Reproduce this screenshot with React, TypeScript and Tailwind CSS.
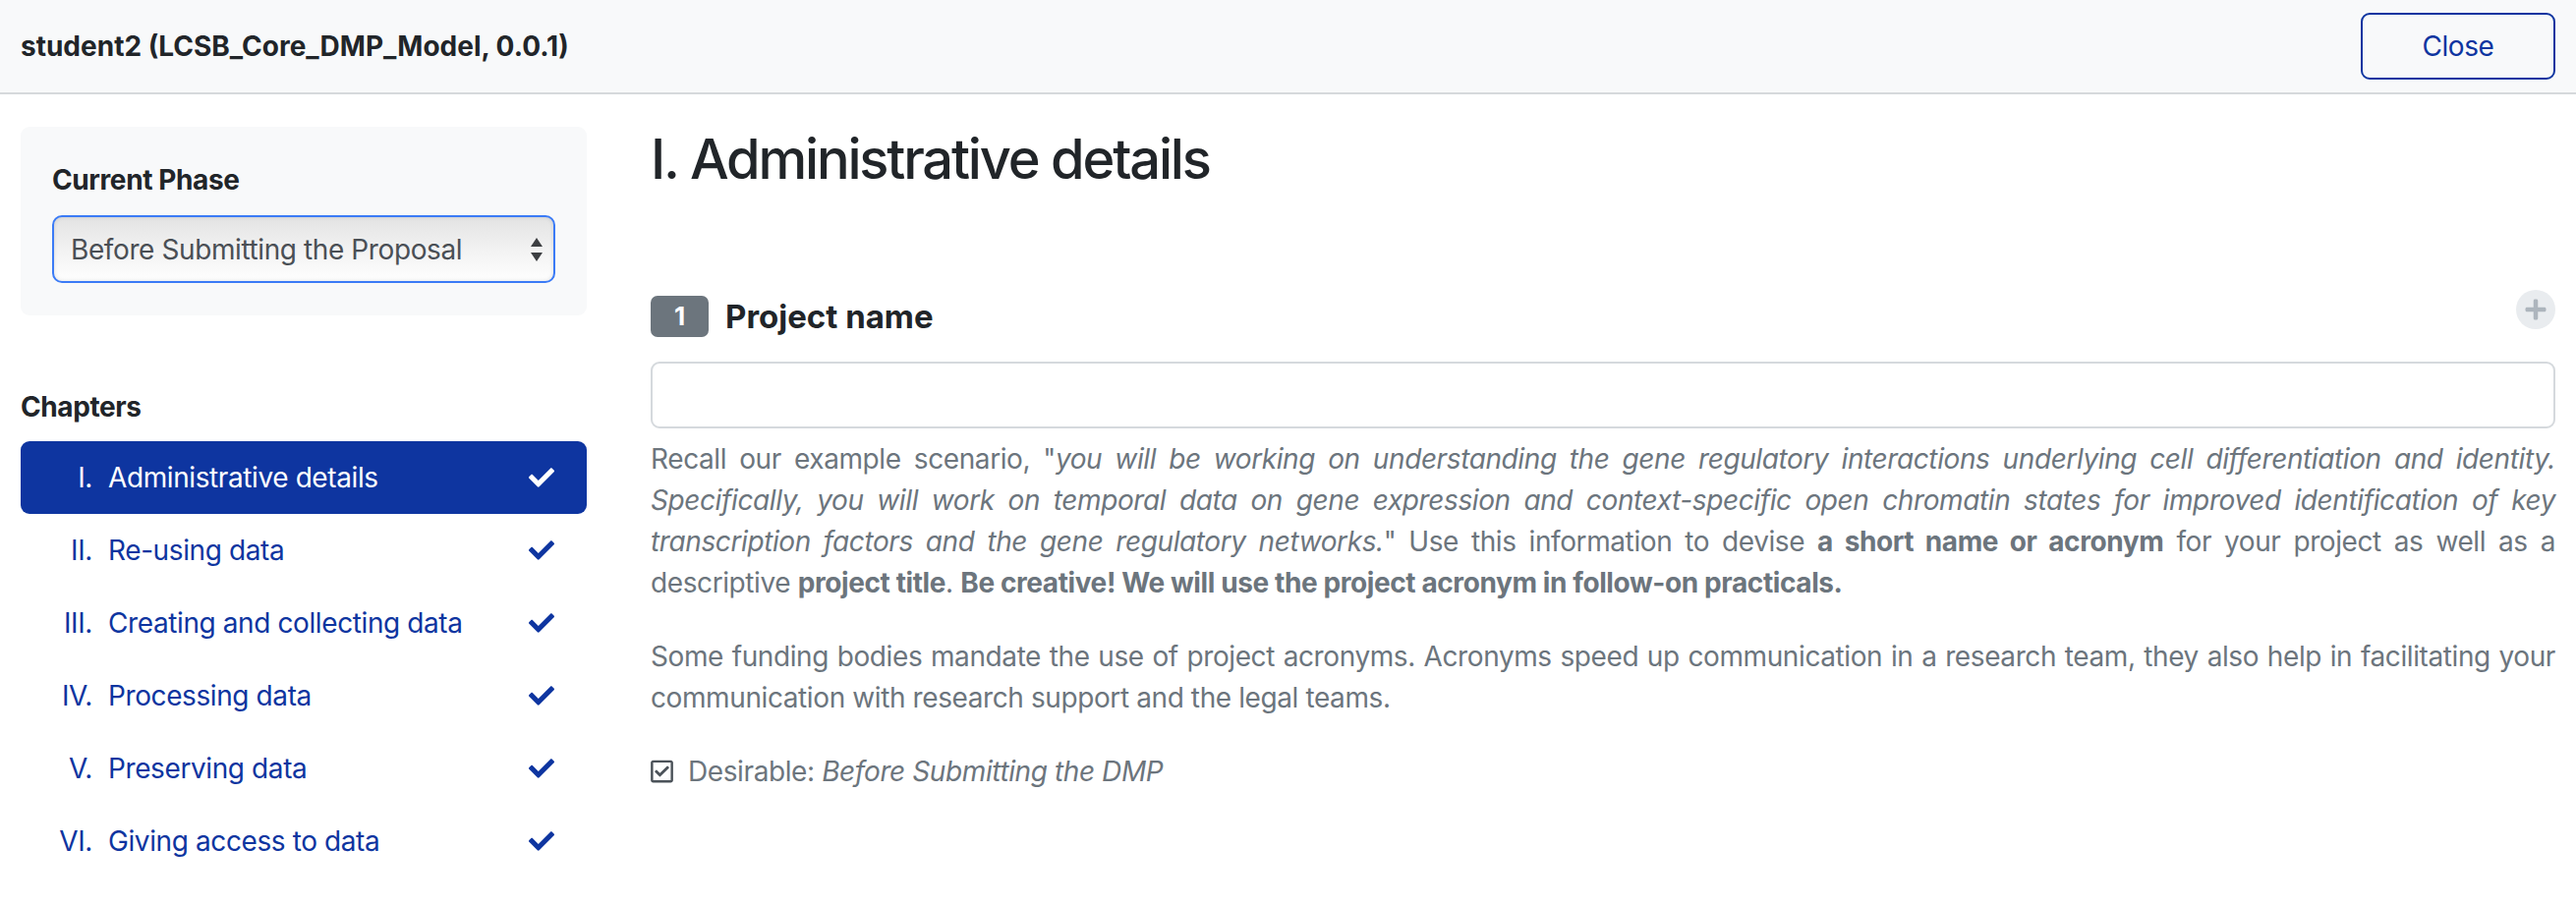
import { useState } from "react";

/* ─── Chapter data ─── */
const chapters = [
  { num: "I.", label: "Administrative details" },
  { num: "II.", label: "Re-using data" },
  { num: "III.", label: "Creating and collecting data" },
  { num: "IV.", label: "Processing data" },
  { num: "V.", label: "Preserving data" },
  { num: "VI.", label: "Giving access to data" },
];

/* ─── Icons ─── */
function CheckIcon({ className }: { className?: string }) {
  return (
    <svg className={className} viewBox="0 0 512 512" aria-hidden="true">
      <path
        fill="currentColor"
        d="M173.898 439.404l-166.4-166.4c-9.997-9.997-9.997-26.206 0-36.204l36.203-36.204c9.997-9.998 26.207-9.998 36.204 0L192 312.69 432.095 72.596c9.997-9.997 26.207-9.997 36.204 0l36.203 36.204c9.997 9.997 9.997 26.206 0 36.204l-294.4 294.401c-9.998 9.997-26.207 9.997-36.204-.001z"
      />
    </svg>
  );
}

function PlusIcon({ className }: { className?: string }) {
  return (
    <svg className={className} viewBox="0 0 448 512" aria-hidden="true">
      <path
        fill="currentColor"
        d="M416 208H272V64c0-17.670-14.330-32-32-32h-32c-17.670 0-32 14.330-32 32v144H32c-17.670 0-32 14.330-32 32v32c0 17.670 14.330 32 32 32h144v144c0 17.670 14.330 32 32 32h32c17.670 0 32-14.330 32-32V304h144c17.670 0 32-14.330 32-32v-32c0-17.670-14.330-32-32-32z"
      />
    </svg>
  );
}

function CheckSquareIcon({ className }: { className?: string }) {
  return (
    <svg className={className} viewBox="0 0 448 512" aria-hidden="true">
      <path
        fill="currentColor"
        d="M400 32H48C21.49 32 0 53.49 0 80v352c0 26.51 21.49 48 48 48h352c26.51 0 48-21.49 48-48V80c0-26.51-21.49-48-48-48zm0 400H48V80h352v352zm-35.864-241.724L191.547 361.48c-4.705 4.667-12.303 4.637-16.97-.068l-90.781-91.516c-4.667-4.705-4.637-12.303.069-16.971l22.719-22.536c4.705-4.667 12.303-4.637 16.97.069l59.792 60.277 141.352-140.216c4.705-4.667 12.303-4.637 16.97.068l22.536 22.718c4.667 4.706 4.637 12.304-.068 16.971z"
      />
    </svg>
  );
}

/* ─── Sidebar ─── */
function Sidebar() {
  const [phase, setPhase] = useState("before-proposal");
  const active = 0;

  return (
    <aside className="w-[618px] shrink-0 px-[21px] pt-[33px]">
      {/* Phase selector */}
      <div className="rounded-[9px] bg-[#f8f9fa] px-[32px] pt-[33px] pb-[33px]">
        <div className="mb-[15px] font-bold text-[#212529]">Current Phase</div>
        <div className="relative">
          <select
            value={phase}
            onChange={(e) => setPhase(e.target.value)}
            className="block h-[69px] w-full appearance-none rounded-[10px] border-2 border-[#3b7bf6] bg-gradient-to-b from-[#e3e3e3] via-[#f2f2f2] to-[#fefefe] pl-[17px] pr-[50px] text-[28px] tracking-[-0.4px] text-[#4a4f55] shadow-[inset_0_0_4px_rgba(0,0,0,0.12)] outline-none"
          >
            <option value="before-proposal">Before Submitting the Proposal</option>
            <option value="before-dmp">Before Submitting the DMP</option>
            <option value="before-project">Before Finishing the Project</option>
          </select>
          <span className="pointer-events-none absolute right-[13px] top-1/2 flex -translate-y-1/2 flex-col items-center gap-[6px]">
            <span className="h-0 w-0 border-x-[6px] border-b-[9px] border-x-transparent border-b-[#3d3f42]" />
            <span className="h-0 w-0 border-x-[6px] border-t-[9px] border-x-transparent border-t-[#3d3f42]" />
          </span>
        </div>
      </div>

      {/* Chapters */}
      <h3 className="mt-[72px] mb-[14px] font-bold text-[#212529]">Chapters</h3>
      <nav className="flex flex-col">
        {chapters.map((c, i) => (
          <a
            key={c.num}
            href="#"
            className={`flex h-[74px] items-center rounded-[9px] pr-[32px] ${
              i === active ? "bg-[#0e35a0] text-white" : "text-[#0e35a0]"
            }`}
          >
            <span className="w-[73px] shrink-0 text-right">{c.num}</span>
            <span className="ml-[16px] flex-1">{c.label}</span>
            <CheckIcon className="h-[26px] w-[28px]" />
          </a>
        ))}
      </nav>
    </aside>
  );
}

/* ─── Main content ─── */
function Content() {
  const [value, setValue] = useState("");

  return (
    <main className="min-w-0 flex-1 pl-[44px] pr-[21px] pt-[33px]">
      <h2 className="text-[56px] font-medium leading-[67px] tracking-[-2.2px] text-[#212529]">
        I. Administrative details
      </h2>

      {/* Question */}
      <div className="mt-[99px] flex h-[48px] justify-between">
        <div className="flex items-center gap-[17px] self-end">
          <span className="flex h-[42px] w-[59px] items-center justify-center rounded-[7px] bg-[#6c757d] text-[26px] font-bold text-white">
            1
          </span>
          <span className="text-[33px] font-bold tracking-normal text-[#212529]">
            Project name
          </span>
        </div>
        <button
          className="flex h-[40px] w-[40px] items-center justify-center self-start rounded-full bg-[#e9ecef] text-[#adb5bd]"
          aria-label="Add"
        >
          <PlusIcon className="h-[24px] w-[22px]" />
        </button>
      </div>

      <input
        value={value}
        onChange={(e) => setValue(e.target.value)}
        className="mt-[25px] block h-[68px] w-full rounded-[9px] border-2 border-[#d5d9dd] px-[20px] text-[28px] outline-none"
      />

      <div className="mt-[10px] text-justify text-[#6c757d]">
        <p>
          Recall our example scenario, "
          <em>
            you will be working on understanding the gene regulatory interactions underlying
            cell differentiation and identity. Specifically, you will work on temporal data on
            gene expression and context-specific open chromatin states for improved
            identification of key transcription factors and the gene regulatory networks.
          </em>
          " Use this information to devise <strong>a short name or acronym</strong> for your
          project as well as a descriptive <strong>project title</strong>.{" "}
          <strong>Be creative! We will use the project acronym in follow-on practicals.</strong>
        </p>
        <p className="mt-[33px]">
          Some funding bodies mandate the use of project acronyms. Acronyms speed up
          communication in a research team, they also help in facilitating your communication
          with research support and the legal teams.
        </p>
      </div>

      <div className="mt-[33px] flex items-center gap-[15px] text-[#6c757d]">
        <CheckSquareIcon className="h-[26px] w-[23px] text-[#4b5259]" />
        <span>
          Desirable: <em>Before Submitting the DMP</em>
        </span>
      </div>
    </main>
  );
}

/* ─── App ─── */
export default function App() {
  return (
    <div className="min-h-screen bg-white font-['Inter','Liberation_Sans',sans-serif] text-[28px] leading-[42px] tracking-[-0.4px]">
      <header className="flex h-[96px] items-center justify-between border-b-2 border-[#d6d9dc] bg-[#f8f9fa] px-[21px]">
        <h1 className="font-bold tracking-normal text-[#212529]">
          student2 (LCSB_Core_DMP_Model, 0.0.1)
        </h1>
        <button className="h-[68px] w-[198px] rounded-[9px] border-2 border-[#0e35a0] text-[#0e35a0]">
          Close
        </button>
      </header>
      <div className="flex">
        <Sidebar />
        <Content />
      </div>
    </div>
  );
}
